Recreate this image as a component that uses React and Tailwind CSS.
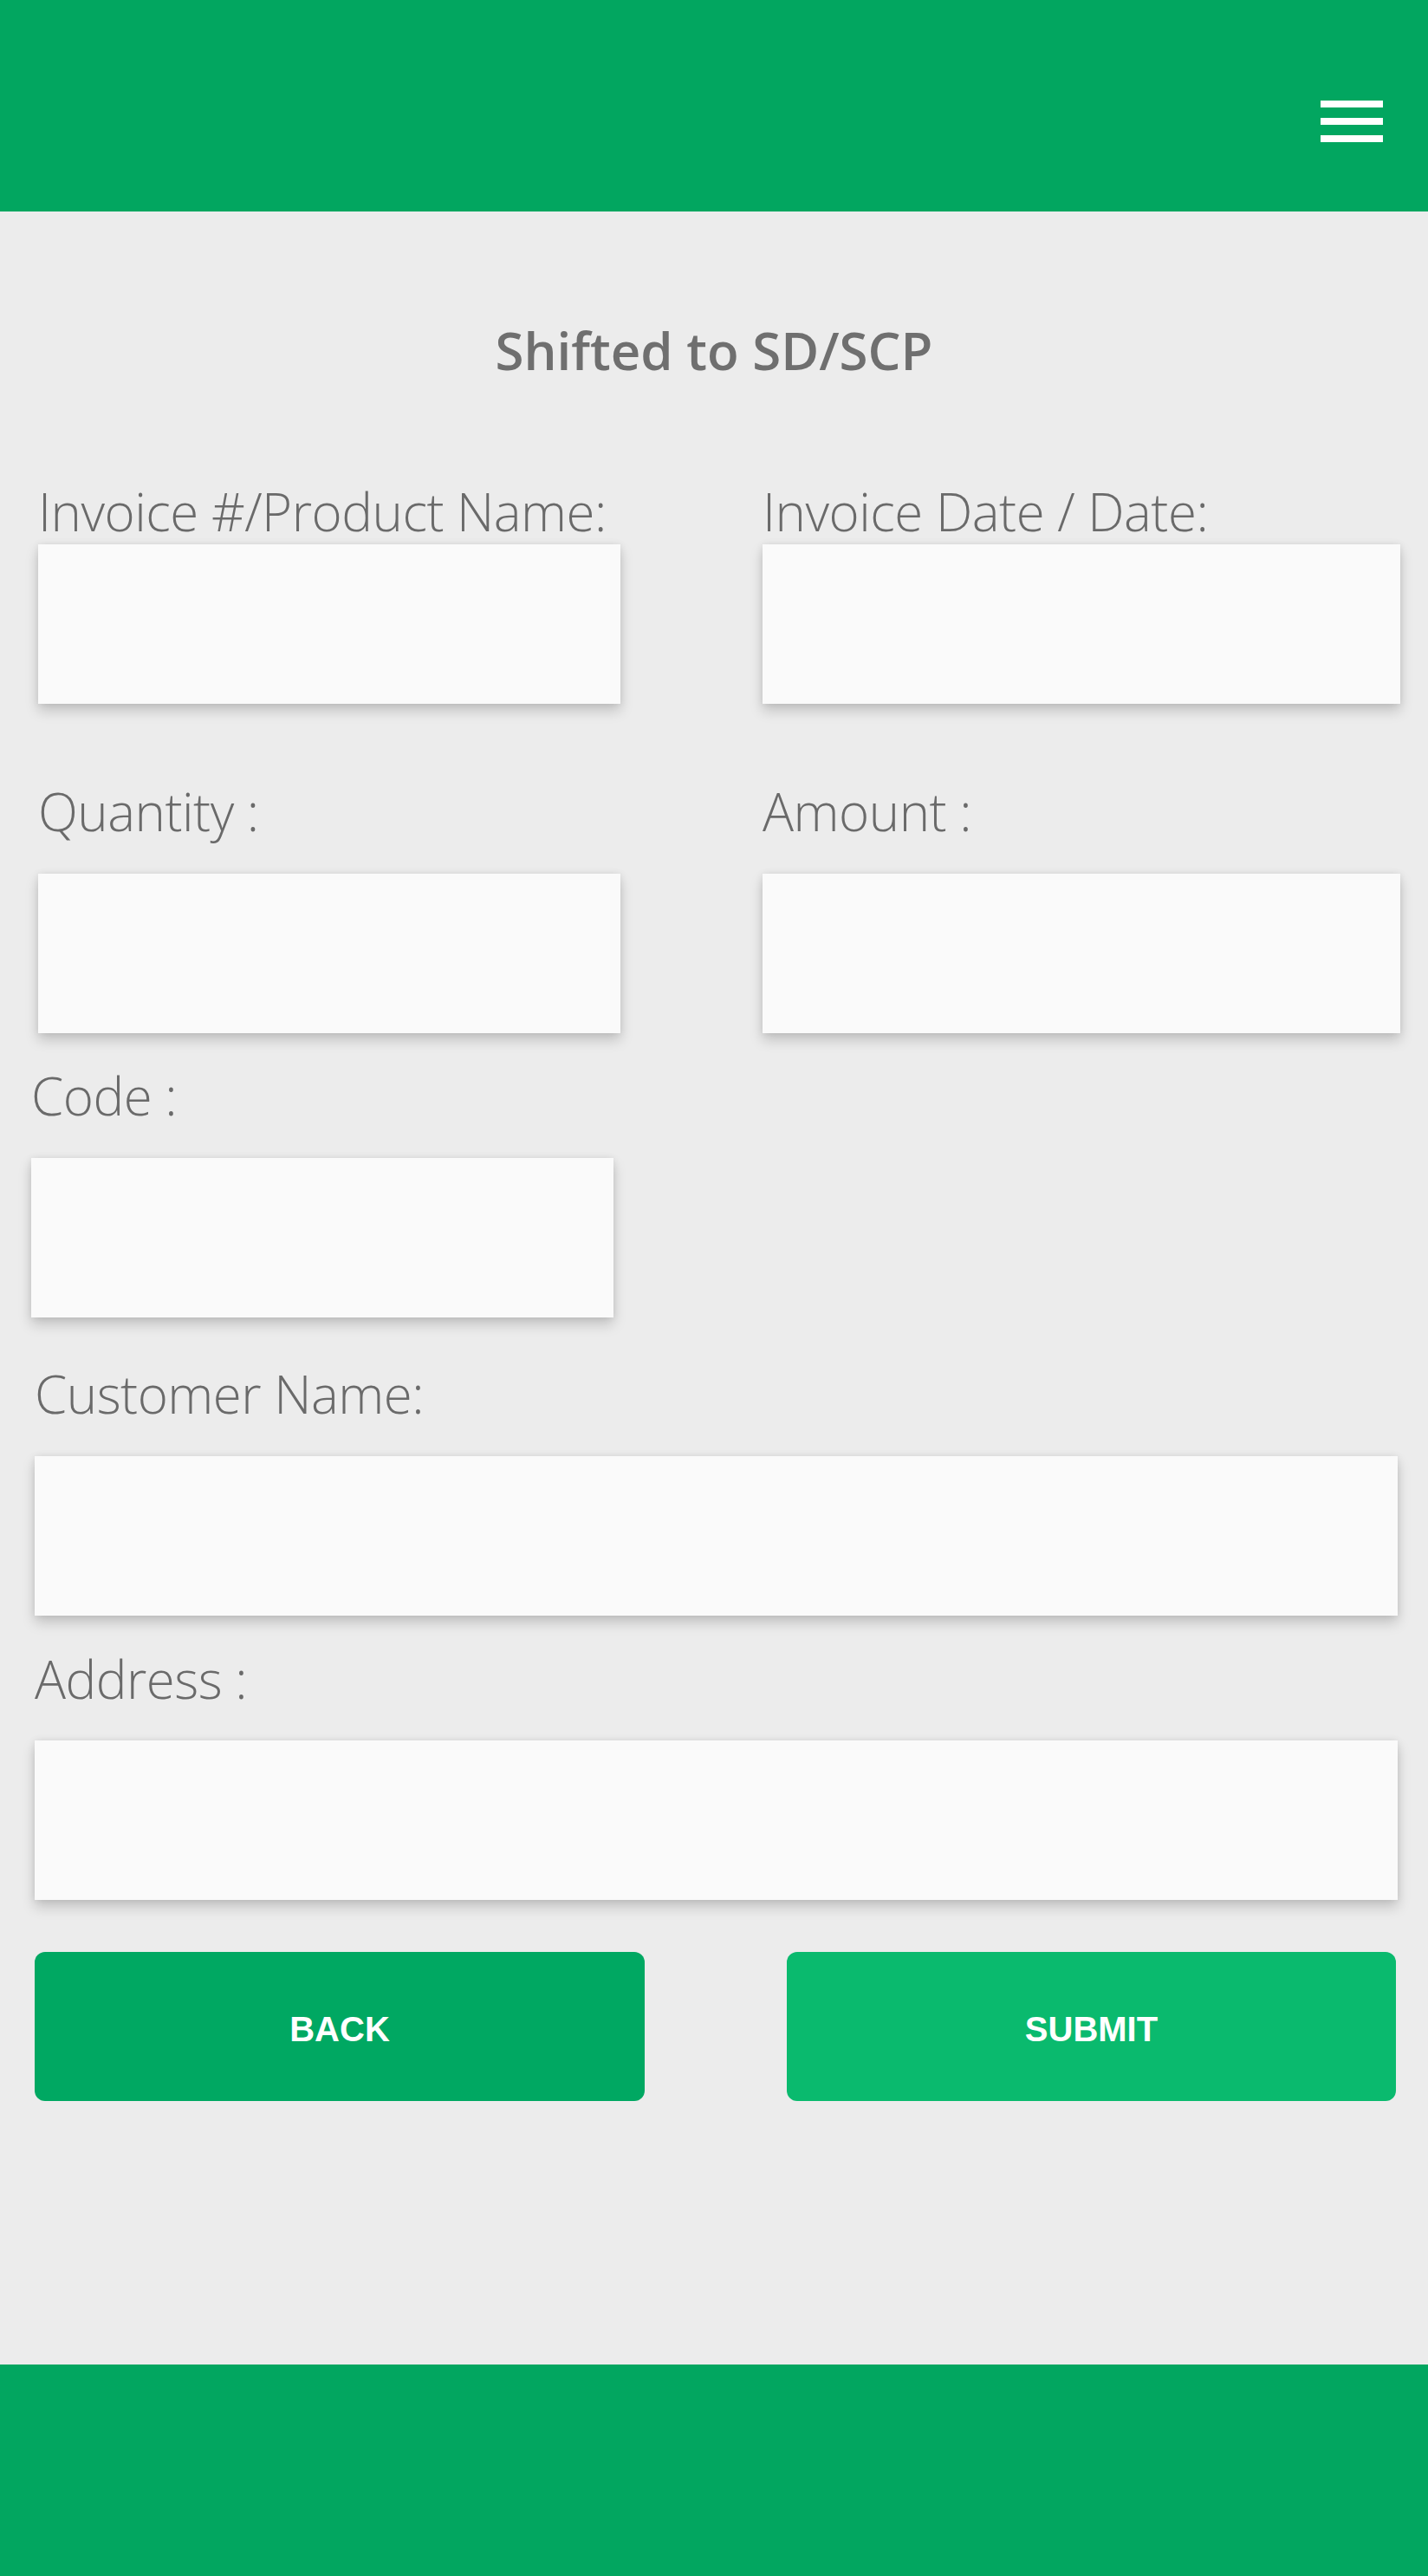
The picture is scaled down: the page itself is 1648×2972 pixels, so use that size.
import React from 'react';

const labelCls = "block text-[60px] leading-none font-light tracking-[-0.5px] text-[#6a6a6a] font-['Open_Sans',sans-serif]";
const inputCls = "block h-[184px] bg-[#fafafa] shadow-[0_8px_14px_rgba(0,0,0,0.18),0_0_8px_rgba(0,0,0,0.08)] outline-none";
const btnCls = "h-[172px] pt-[6px] rounded-[12px] text-white text-[40px] font-bold font-['Liberation_Sans',Arial,sans-serif]";

const App = () => {
  return (
    <div className="min-h-[2972px] flex flex-col bg-[#ececec]">
      {/* Header */}
      <header className="h-[244px] bg-[#02a660] flex justify-end items-start pt-[116px] pr-[52px]">
        <button className="flex flex-col gap-[12px]">
          <span className="block w-[72px] h-[8px] bg-white"></span>
          <span className="block w-[72px] h-[8px] bg-white"></span>
          <span className="block w-[72px] h-[8px] bg-white"></span>
        </button>
      </header>

      {/* Form */}
      <main className="flex-1 pt-[130px]">
        <h1 className="text-center text-[60px] leading-none font-semibold text-[#6f6f6f] font-['Open_Sans',sans-serif]">
          Shifted to SD/SCP
        </h1>

        <div className="flex gap-[164px] pl-[44px] mt-[126px]">
          <div className="w-[672px]">
            <label className={labelCls}>Invoice #/Product Name:</label>
            <input className={`${inputCls} w-full mt-[8px]`} />
          </div>
          <div className="w-[736px]">
            <label className={labelCls}>Invoice Date / Date:</label>
            <input className={`${inputCls} w-full mt-[8px]`} />
          </div>
        </div>

        <div className="flex gap-[164px] pl-[44px] mt-[94px]">
          <div className="w-[672px]">
            <label className={labelCls}>Quantity :</label>
            <input className={`${inputCls} w-full mt-[42px]`} />
          </div>
          <div className="w-[736px]">
            <label className={labelCls}>Amount :</label>
            <input className={`${inputCls} w-full mt-[42px]`} />
          </div>
        </div>

        <div className="pl-[36px] mt-[42px] w-[708px]">
          <label className={labelCls}>Code :</label>
          <input className={`${inputCls} w-[672px] mt-[42px]`} />
        </div>

        <div className="pl-[40px] mt-[58px]">
          <label className={labelCls}>Customer Name:</label>
          <input className={`${inputCls} w-[1573px] mt-[42px]`} />
        </div>

        <div className="pl-[40px] mt-[43px]">
          <label className={labelCls}>Address :</label>
          <input className={`${inputCls} w-[1573px] mt-[41px]`} />
        </div>

        <div className="flex gap-[164px] pl-[40px] mt-[60px]">
          <button className={`${btnCls} w-[704px] bg-[#00a862]`}>BACK</button>
          <button className={`${btnCls} w-[703px] bg-[#0aba6e]`}>SUBMIT</button>
        </div>
      </main>

      {/* Footer */}
      <footer className="h-[244px] bg-[#02a660]"></footer>
    </div>
  );
};

export default App;
